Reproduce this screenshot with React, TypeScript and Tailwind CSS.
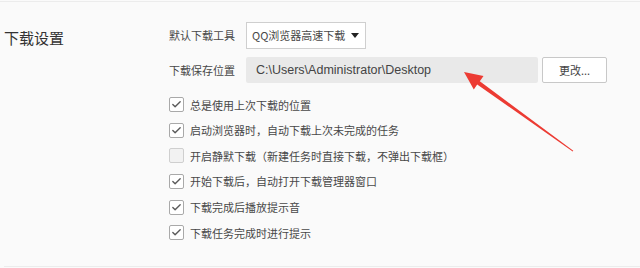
import { Check } from "lucide-react";

const options = [
  { label: "总是使用上次下载的位置", checked: true },
  { label: "启动浏览器时，自动下载上次未完成的任务", checked: true },
  { label: "开启静默下载（新建任务时直接下载，不弹出下载框）", checked: false },
  { label: "开始下载后，自动打开下载管理器窗口", checked: true },
  { label: "下载完成后播放提示音", checked: true },
  { label: "下载任务完成时进行提示", checked: true },
];

function CheckRow({ label, checked }: { label: string; checked: boolean }) {
  return (
    <div className="flex h-[25.6px] items-center">
      <span
        className={
          checked
            ? "flex h-[15px] w-[15px] items-center justify-center rounded-[2px] border border-[#a9a9a9] bg-white"
            : "flex h-[15px] w-[15px] items-center justify-center rounded-[2px] border border-[#cfcfcf] bg-[#f2f2f2]"
        }
      >
        {checked && <Check size={11} strokeWidth={3} className="text-[#5a5a5a]" />}
      </span>
      <span className="ml-[6px] text-[11px] text-[#484848]">{label}</span>
    </div>
  );
}

export default function App() {
  return (
    <div
      className="relative h-[268px] w-[640px] overflow-hidden bg-[#fafafa] text-[#333]"
      style={{ fontFamily: '"Noto Sans CJK SC", "Open Sans", sans-serif' }}
    >
      <div className="mt-[1px] h-px w-full bg-[#ececec]" />
      <div className="flex">
        <div className="w-[169px] pl-[4px] pt-[25px] text-[15px] text-[#333]">下载设置</div>
        <div className="flex flex-col pt-[20px]">
          <div className="flex h-[27px] items-center">
            <span className="w-[77px] text-[11px] text-[#484848]">默认下载工具</span>
            <div className="flex h-[27px] w-[120px] items-center justify-between border border-[#cfcfcf] bg-white pl-[5px] pr-[6px]">
              <span className="text-[11px] text-[#484848]">QQ浏览器高速下载</span>
              <span className="h-0 w-0 border-x-[4px] border-t-[5px] border-x-transparent border-t-[#222]" />
            </div>
          </div>
          <div className="mt-[8px] flex h-[26px] items-center">
            <span className="w-[77px] text-[11px] text-[#484848]">下载保存位置</span>
            <div
              className="flex h-[26px] w-[292px] items-center rounded-[2px] bg-[#e9e9e9] pl-[10px] text-[12.5px] text-[#444]"
              style={{ fontFamily: '"Liberation Sans", sans-serif' }}
            >
              C:\Users\Administrator\Desktop
            </div>
            <button className="ml-[4px] flex h-[26px] w-[65px] items-center justify-center rounded-[2px] border border-[#c8c8c8] bg-white text-[11px] text-[#444]">
              更改...
            </button>
          </div>
          <div className="mt-[9px] flex flex-col">
            {options.map((o) => (
              <CheckRow key={o.label} label={o.label} checked={o.checked} />
            ))}
          </div>
        </div>
      </div>
      <div className="absolute bottom-[1px] left-[4px] right-0 h-px bg-[#ececec]" />
      <svg className="pointer-events-none absolute left-0 top-0" width="640" height="268" viewBox="0 0 640 268">
        <polygon
          points="464,72 483.5,76 479.8,81.2 573.3,150.8 572.7,151.4 477.2,84.4 473.8,89.5"
          fill="#ec3b33"
        />
      </svg>
    </div>
  );
}
